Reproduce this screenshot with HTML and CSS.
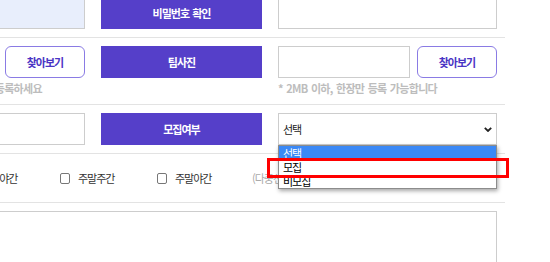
FILE: index.html
```html
<!DOCTYPE html>
<html lang="ko">

<head>
    <meta charset="UTF-8">
    <meta name="viewport" content="width=device-width, initial-scale=1.0">
    <title>팀 등록</title>
    <link rel="stylesheet" href="styles.css">
</head>

<body>
    <form class="team-form">
        <div class="row">
            <div class="label">팀 비밀번호</div>
            <div class="field">
                <input type="password" class="text-input autofill">
            </div>
            <div class="label">비밀번호 확인</div>
            <div class="field">
                <input type="password" class="text-input">
            </div>
        </div>

        <div class="row">
            <div class="label">팀 로고</div>
            <div class="field">
                <div class="file-line">
                    <input type="text" class="text-input" readonly>
                    <button type="button" class="btn-find">찾아보기</button>
                </div>
                <p class="help">* 팀 로고 이미지 파일을 먼저 등록하세요</p>
            </div>
            <div class="label">팀사진</div>
            <div class="field">
                <div class="file-line">
                    <input type="text" class="text-input" readonly>
                    <button type="button" class="btn-find">찾아보기</button>
                </div>
                <p class="help">* 2MB 이하, 한장만 등록 가능합니다</p>
            </div>
        </div>

        <div class="row">
            <div class="label">연락처</div>
            <div class="field">
                <input type="text" class="text-input">
            </div>
            <div class="label">모집여부</div>
            <div class="field">
                <div class="select-box">
                    <span>선택</span>
                    <svg width="8" height="5" viewBox="0 0 8 5">
                        <path d="M0.8 0.8 L4 4 L7.2 0.8" fill="none" stroke="#222" stroke-width="1.8" />
                    </svg>
                    <ul class="options">
                        <li class="on">선택</li>
                        <li>모집</li>
                        <li>비모집</li>
                    </ul>
                    <div class="mark"></div>
                </div>
            </div>
        </div>

        <div class="row">
            <div class="label">활동시간</div>
            <div class="checks">
                <label class="check"><input type="checkbox">평일주간</label>
                <label class="check"><input type="checkbox">평일야간</label>
                <label class="check"><input type="checkbox">주말주간</label>
                <label class="check"><input type="checkbox">주말야간</label>
                <span class="note">(다중선택 가능)</span>
            </div>
        </div>

        <div class="row">
            <div class="label">팀 소개</div>
            <textarea class="intro"></textarea>
        </div>
    </form>
</body>

</html>
```

FILE: styles.css
```css
* {
    box-sizing: border-box;
}

body {
    margin: 0;
    overflow: hidden;
    background-color: #fff;
    font-family: "Noto Sans CJK KR", "Noto Sans", sans-serif;
    font-size: 11px;
    letter-spacing: -1px;
    word-spacing: 1px;
    color: #333;
}

/* page is scrolled to the right, so the left labels sit off screen */
.team-form {
    width: 816px;
    margin: -11px 0 0 -311px;
}

.row {
    display: grid;
    grid-template-columns: 161px 219px 161px 219px;
    column-gap: 16px;
    align-items: start;
    padding: 8px 8px 8px 0;
    border-bottom: 1px solid #e3e3e3;
}

.label {
    height: 32px;
    display: flex;
    align-items: center;
    justify-content: center;
    background-color: #553fc9;
    color: #fff;
    font-weight: 700;
}

.text-input {
    display: block;
    width: 100%;
    height: 32px;
    border: 1px solid #cdcdcd;
    background-color: #fff;
    outline: none;
}

.text-input.autofill {
    background-color: #e8eefc;
}

.file-line {
    display: flex;
    gap: 7px;
}

.file-line .text-input {
    width: 132px;
}

.btn-find {
    width: 80px;
    height: 32px;
    border: 1px solid #8a7be4;
    border-radius: 6px;
    background-color: #fff;
    color: #4a34c4;
    font-family: inherit;
    font-size: 11px;
    font-weight: 700;
    letter-spacing: -1px;
    cursor: pointer;
}

.help {
    margin: 3px 0 0;
    line-height: 15px;
    color: #bdbdbd;
    font-weight: 700;
    letter-spacing: -0.7px;
    white-space: nowrap;
}

.select-box {
    position: relative;
    height: 32px;
    display: flex;
    align-items: center;
    justify-content: space-between;
    padding: 0 4px 0 4px;
    border: 1px solid #cdcdcd;
    color: #222;
}

/* opened native dropdown */
.options {
    position: absolute;
    top: 31px;
    left: -1px;
    right: -1px;
    margin: 0;
    padding: 0;
    list-style: none;
    border: 1px solid #8c8c8c;
    background-color: #fff;
    box-shadow: 1px 2px 4px rgba(0, 0, 0, 0.35);
    color: #000;
    z-index: 2;
}

.options li {
    height: 14px;
    line-height: 14px;
    padding-left: 4px;
}

.options li.on {
    background-color: #3b89f6;
    color: #fff;
}

.mark {
    position: absolute;
    top: 44px;
    left: -12px;
    width: 242px;
    height: 20px;
    border: 3px solid #f00;
    z-index: 3;
}

.checks {
    grid-column: 2 / -1;
    height: 32px;
    display: flex;
    align-items: center;
    gap: 41px;
}

.check {
    width: 56px;
    display: flex;
    align-items: center;
    gap: 8px;
    white-space: nowrap;
}

.check input {
    appearance: none;
    flex: none;
    width: 10px;
    height: 11px;
    margin: 0;
    border: 1px solid #777;
    border-radius: 2px;
    background-color: #fff;
}

.note {
    margin-left: -2px;
    color: #aaa;
    white-space: nowrap;
}

.intro {
    grid-column: 2 / -1;
    height: 90px;
    border: 1px solid #cdcdcd;
    resize: none;
}
```
